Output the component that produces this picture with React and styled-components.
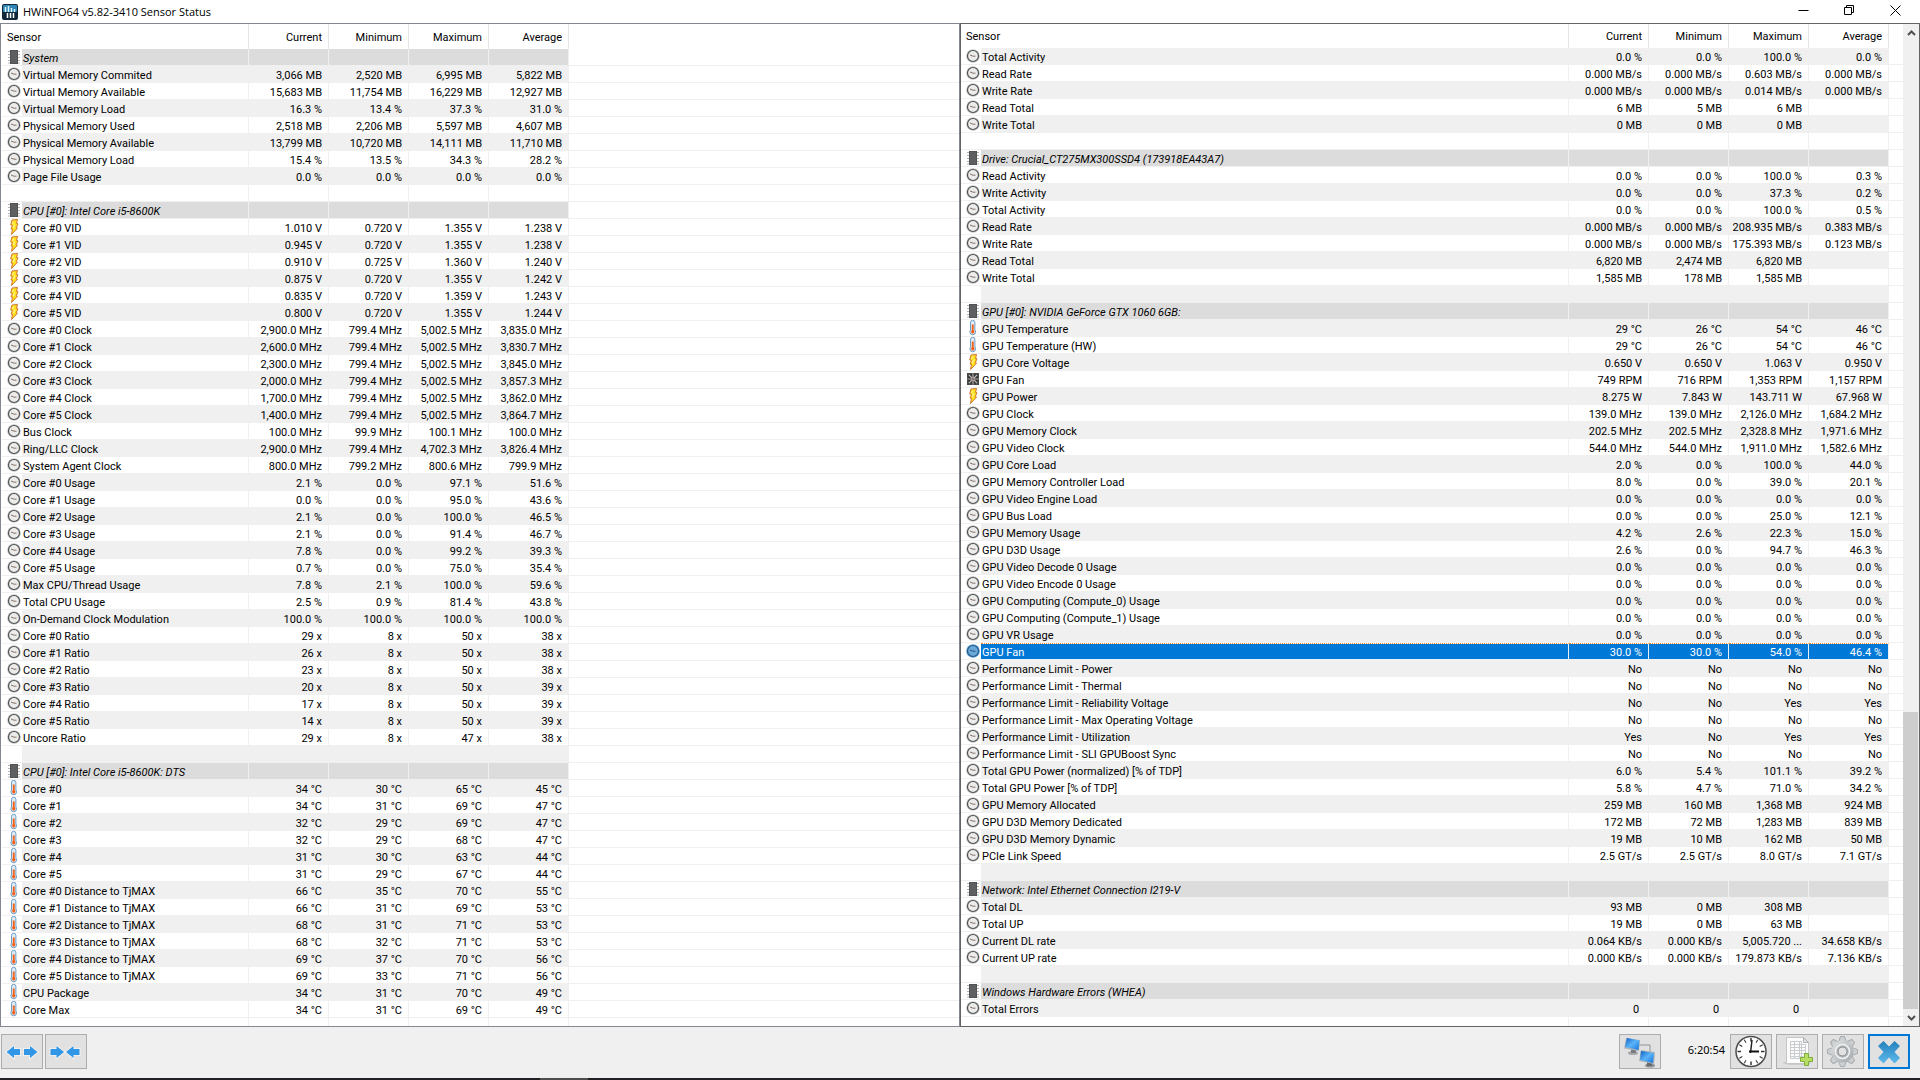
import React from "react";
import styled, { createGlobalStyle, css } from "styled-components";

const GlobalStyle = createGlobalStyle`
  * {
    box-sizing: border-box;
  }

  body {
    margin: 0;
    background: #f0f0f0;
    color: #000000;
    font-family: Roboto, "Noto Sans", sans-serif;
    font-size: 11px;
  }

  button {
    padding: 0;
    border: none;
    background: none;
    font: inherit;
  }

  svg {
    display: block;
  }
`;

const Window = styled.div`
  display: flex;
  flex-direction: column;
  min-height: 100vh;
`;

const TitleBar = styled.header`
  display: flex;
  align-items: flex-start;
  height: 23px;
  padding: 0 2px;
  background: #ffffff;
`;

const AppIcon = styled.svg`
  margin-top: 4px;
`;

const Title = styled.h1`
  flex: 1;
  margin: 0 0 0 5px;
  font-family: "Open Sans", "Noto Sans", sans-serif;
  font-size: 11px;
  font-weight: 400;
  line-height: 24px;
`;

const WindowButton = styled.button`
  display: flex;
  align-items: center;
  justify-content: center;
  width: 46px;
  height: 21px;

  &:hover {
    background: #e5e5e5;
  }
`;

const Panes = styled.main`
  display: grid;
  flex: 1;
  grid-template-columns: minmax(0, 1fr) minmax(0, 1fr);
`;

const Pane = styled.section`
  display: flex;
  padding-left: ${(props) => (props.$active ? 0 : 1)}px;
  background: #ffffff;
  border: 1px solid ${(props) => (props.$active ? "#646464" : "#828790")};
`;

const Table = styled.table`
  flex: 1;
  width: 100%;
  height: 0;
  table-layout: fixed;
  border-collapse: separate;
  border-spacing: 0;

  col.icon {
    width: 20px;
  }

  col.value {
    width: 80px;
  }
`;

const NameCol = styled.col`
  width: ${(props) => props.$width};
`;

const FillCol = styled.col`
  width: ${(props) => props.$width};
`;

const HeadCell = styled.th`
  height: ${(props) => props.$height}px;
  padding: 1px 6px 0 5px;
  border-right: 1px solid #e5e5e5;
  font-weight: 400;
  text-align: ${(props) => props.$align || "right"};

  &:last-child {
    border-right: none;
  }
`;

const Cell = styled.td`
  height: 17px;
  padding: 4px 6px 0 0;
  border-right: 1px solid #f0f0f0;
  border-bottom: 1px solid #f0f0f0;
  line-height: 12px;
  text-align: right;
  white-space: nowrap;
`;

const NameCell = styled(Cell)`
  padding: 4px 0 0 1px;
  overflow: hidden;
  text-align: left;
`;

const IconCell = styled(Cell)`
  padding: 0 0 0 4px;
  border-right: none;
`;

const FillCell = styled(Cell)`
  border-right: none;
`;

const Row = styled.tr`
  ${Cell}:not(${IconCell}):not(${FillCell}) {
    ${(props) =>
      props.$striped &&
      css`
        background: #f0f0f0;
      `}
    ${(props) =>
      props.$group &&
      css`
        background: #dcdcdc;
        background-clip: padding-box;
        font-style: italic;
      `}
    ${(props) =>
      props.$selected &&
      css`
        padding-top: 3px;
        background: #0078d7;
        background-clip: padding-box;
        color: #ffffff;
        border-top: 1px dotted #ff8728;
      `}
  }
`;

const TailCell = styled.td`
  height: ${(props) => props.$height}px;
  padding: 0;
  border-right: ${(props) => (props.$line ? "1px solid #f0f0f0" : "none")};
`;

const ScrollBar = styled.div`
  display: flex;
  flex-direction: column;
  width: 16px;
  background: #f0f0f0;
`;

const ScrollArrow = styled.button`
  display: flex;
  align-items: center;
  justify-content: center;
  height: 17px;
`;

const ScrollGap = styled.div`
  flex: 671;
`;

const ScrollThumb = styled.div`
  flex: 297;
  margin-right: 1px;
  background: #cdcdcd;
`;

const Toolbar = styled.footer`
  display: flex;
  align-items: center;
  justify-content: space-between;
  height: 51px;
  padding: 0 10px 2px 1px;
`;

const ToolGroup = styled.div`
  display: flex;
  gap: ${(props) => props.$gap}px;
`;

const ToolButton = styled.button`
  display: flex;
  align-items: center;
  justify-content: center;
  width: 42px;
  height: 35px;
  background: #e1e1e1;
  border: ${(props) =>
    props.$focused ? "2px solid #0078d7" : "1px solid #adadad"};

  &:hover {
    background: #e5f1fb;
  }
`;

const Elapsed = styled.time`
  width: 61px;
  padding-right: 1px;
  font-family: "Noto Sans", sans-serif;
  line-height: 32px;
  text-align: right;
`;

const TaskbarEdge = styled.div`
  height: 2px;
  padding-left: 540px;
  background: #202125;
`;

const TaskbarActive = styled.div`
  width: 48px;
  height: 2px;
  background: #4d4d50;
`;

const ChipIcon = () => (
  <svg width="16" height="16" viewBox="0 0 16 16">
    <path
      d="M2 2.500h12M2 5.500h12M2 8.500h12M2 11.500h12M2 14h12"
      stroke="#b4b4b4"
      strokeWidth="1"
    />
    <rect x="4" y="1" width="8" height="14" fill="#505254" />
    <rect x="5" y="2" width="6" height="12" fill="#5d5f61" />
  </svg>
);

const DialIcon = ({ selected }) => (
  <svg width="16" height="16" viewBox="0 0 16 16">
    <circle cx="8" cy="8" r="6.8" fill={selected ? "#5d9dd0" : "#c6c6c6"} />
    <circle
      cx="8"
      cy="8"
      r="5.500"
      fill={selected ? "#69a9da" : "#ececea"}
      stroke={selected ? "#24588a" : "#4e5153"}
      strokeWidth="1.200"
    />
    <path
      d="M5 7l3 1.200h2.500"
      fill="none"
      stroke={selected ? "#2c5578" : "#86736c"}
      strokeWidth="1"
    />
  </svg>
);

const BoltIcon = () => (
  <svg width="16" height="16" viewBox="0 0 16 16">
    <path
      d="M6 1l5.500-.5-1 4 1.500.3-1.800 4 1.300.4L5.500 15.500l1-5.300L5 10l1.500-3.600L4.700 6z"
      fill="#ffe21c"
      stroke="#cf7432"
      strokeWidth="1"
    />
    <path d="M7.500 2.500L6.500 5M8.500 5.500L7.500 9" stroke="#fff8bd" strokeWidth="1" />
  </svg>
);

const ThermoIcon = () => (
  <svg width="16" height="16" viewBox="0 0 16 16">
    <path
      d="M5.500 2.500a2.200 2.200 0 0 1 4.400 0V10a3 3 0 0 1 .6 2 2.800 2.800 0 0 1-5.600 0 3 3 0 0 1 .6-2z"
      fill="#dcebf5"
      stroke="#6d9fc4"
      strokeWidth="1"
    />
    <path d="M6.800 4.500h1.900V10l.8 1.500-.8 2H6.800l-.8-2 .8-1.500z" fill="#f4611a" />
  </svg>
);

const FanIcon = () => (
  <svg width="16" height="16" viewBox="0 0 16 16">
    <rect x="2" y="2" width="12" height="12" fill="#484848" />
    <circle cx="8" cy="8" r="5" fill="#2c2c2c" />
    <path
      d="M8 2.500v11M2.500 8h11M4 4l8 8M12 4l-8 8"
      stroke="#b9b5b5"
      strokeWidth="1.200"
    />
    <circle cx="8" cy="8" r="1.500" fill="#8a7474" />
  </svg>
);

const ICONS = {
  chip: ChipIcon,
  dial: DialIcon,
  bolt: BoltIcon,
  thermo: ThermoIcon,
  fan: FanIcon,
};

const ArrowPair = ({ inward }) => {
  const shapes = inward
    ? ["M1.500 8h6V5l7.500 6-7.500 6v-3h-6z", "M30.500 8h-6V5L17 11l7.500 6v-3h6z"]
    : ["M15 8H9V5l-7.500 6L9 17v-3h6z", "M19 8h6V5l7.500 6-7.500 6v-3h-6z"];
  return (
    <svg width="34" height="22" viewBox="0 0 34 22">
      {shapes.map((d) => (
        <g key={d}>
          <path
            d={d}
            fill="none"
            stroke="#f4f4f4"
            strokeWidth="2"
            strokeDasharray="2 1"
          />
          <path d={d} fill="#3296e6" />
        </g>
      ))}
    </svg>
  );
};

const NetworkIcon = () => (
  <svg width="34" height="32" viewBox="0 0 34 32">
    <defs>
      <linearGradient id="screen" x1="0" y1="0" x2="1" y2="1">
        <stop offset="0" stopColor="#0a5fc4" />
        <stop offset="0.5" stopColor="#5cb4f8" />
        <stop offset="1" stopColor="#1272dc" />
      </linearGradient>
    </defs>
    <path d="M16 9h11v8" fill="none" stroke="#8d9297" strokeWidth="1" />
    <ellipse cx="10" cy="17" rx="5" ry="2" fill="#a5a9ac" />
    <path d="M8 13h5v4H8z" fill="#777b80" />
    <path d="M3 2l14 2-1 11L1 12.500z" fill="#aeb4ba" />
    <path d="M4 2l12.500 2.500-1 9.500L2 11z" fill="url(#screen)" />
    <ellipse cx="27" cy="29.500" rx="5" ry="2" fill="#909498" />
    <path d="M24 26h5v4h-5z" fill="#666a70" />
    <path d="M18 14l14 2-1 12-15-3z" fill="#aeb4ba" />
    <path d="M18 15l13 2-1 10-13-3z" fill="url(#screen)" />
  </svg>
);

const ClockIcon = () => (
  <svg width="34" height="33" viewBox="0 0 34 33">
    <circle
      cx="17"
      cy="16.500"
      r="15"
      fill="#ffffff"
      stroke="#4c4c4c"
      strokeWidth="1.500"
    />
    {[...Array(12)].map((_, i) => (
      <path
        key={i}
        d="M17 3v3.500"
        stroke="#333333"
        strokeWidth={i % 3 === 0 ? 1.5 : 1}
        transform={`rotate(${i * 30} 17 16.500)`}
      />
    ))}
    <path d="M16.500 18L18 5" stroke="#222222" strokeWidth="1.500" />
    <path d="M15 16.500h10" stroke="#111111" strokeWidth="2" />
  </svg>
);

const ReportIcon = () => (
  <svg width="34" height="33" viewBox="0 0 34 33">
    <ellipse cx="17" cy="28" rx="14" ry="2" fill="#cbcbcb" />
    <path d="M6.500 2.500h17l5 5v21h-22z" fill="#fbfbfb" stroke="#c6c6c6" />
    <path d="M23.500 2.500v5h5z" fill="#e3e3e3" stroke="#b0b0b0" />
    <path
      d="M10.500 6.500h11v17h-11zM10.500 9.500h15M10.500 12.500h15M10.500 15.500h15M10.500 18.500h15M10.500 21.500h13M14.500 6.500v17M19.500 6.500v17M25.500 9.500v9"
      fill="none"
      stroke="#c9ccce"
    />
    <path
      d="M24.500 18.500h4v4h4v4h-4v4h-4v-4h-4v-4h4z"
      fill="#b7de64"
      stroke="#7fae38"
    />
  </svg>
);

const GearIcon = () => (
  <svg width="34" height="33" viewBox="0 0 34 33">
    <defs>
      <linearGradient id="metal" x1="0" y1="0" x2="1" y2="1">
        <stop offset="0" stopColor="#dfe2e3" />
        <stop offset="1" stopColor="#a3a8ab" />
      </linearGradient>
    </defs>
    <g fill="#cdd0d2" stroke="#a8acaf" strokeWidth="1">
      {[...Array(8)].map((_, i) => (
        <path
          key={i}
          d="M12.500 7.500l2-6h4l2 6z"
          transform={`rotate(${i * 45} 16.500 16.500)`}
        />
      ))}
    </g>
    <circle cx="16.500" cy="16.500" r="11" fill="url(#metal)" />
    <circle
      cx="16.500"
      cy="16.500"
      r="7"
      fill="#b3b7ba"
      stroke="#f3f3f3"
      strokeWidth="1.500"
    />
    <circle cx="16.500" cy="16.500" r="4.500" fill="#e1e1e1" stroke="#85898c" />
  </svg>
);

const CrossIcon = () => (
  <svg width="26" height="26" viewBox="0 0 26 26">
    <defs>
      <linearGradient id="cross" x1="0" y1="0" x2="0" y2="1">
        <stop offset="0" stopColor="#2381bd" />
        <stop offset="1" stopColor="#5fb9ec" />
      </linearGradient>
    </defs>
    <path
      d="M7.500 2l5.500 5.500L18.500 2 24 7l-5.500 6 5.500 6-5.500 5.500L13 18.500l-5.500 6L2 19l5.500-6L2 7z"
      fill="url(#cross)"
    />
  </svg>
);

const group = (name) => ["chip", name];
const blank = [];

const leftRows = [
  group("System"),
  ["dial", "Virtual Memory Commited", "3,066 MB", "2,520 MB", "6,995 MB", "5,822 MB"],
  ["dial", "Virtual Memory Available", "15,683 MB", "11,754 MB", "16,229 MB", "12,927 MB"],
  ["dial", "Virtual Memory Load", "16.3 %", "13.4 %", "37.3 %", "31.0 %"],
  ["dial", "Physical Memory Used", "2,518 MB", "2,206 MB", "5,597 MB", "4,607 MB"],
  ["dial", "Physical Memory Available", "13,799 MB", "10,720 MB", "14,111 MB", "11,710 MB"],
  ["dial", "Physical Memory Load", "15.4 %", "13.5 %", "34.3 %", "28.2 %"],
  ["dial", "Page File Usage", "0.0 %", "0.0 %", "0.0 %", "0.0 %"],
  blank,
  group("CPU [#0]: Intel Core i5-8600K"),
  ["bolt", "Core #0 VID", "1.010 V", "0.720 V", "1.355 V", "1.238 V"],
  ["bolt", "Core #1 VID", "0.945 V", "0.720 V", "1.355 V", "1.238 V"],
  ["bolt", "Core #2 VID", "0.910 V", "0.725 V", "1.360 V", "1.240 V"],
  ["bolt", "Core #3 VID", "0.875 V", "0.720 V", "1.355 V", "1.242 V"],
  ["bolt", "Core #4 VID", "0.835 V", "0.720 V", "1.359 V", "1.243 V"],
  ["bolt", "Core #5 VID", "0.800 V", "0.720 V", "1.355 V", "1.244 V"],
  ["dial", "Core #0 Clock", "2,900.0 MHz", "799.4 MHz", "5,002.5 MHz", "3,835.0 MHz"],
  ["dial", "Core #1 Clock", "2,600.0 MHz", "799.4 MHz", "5,002.5 MHz", "3,830.7 MHz"],
  ["dial", "Core #2 Clock", "2,300.0 MHz", "799.4 MHz", "5,002.5 MHz", "3,845.0 MHz"],
  ["dial", "Core #3 Clock", "2,000.0 MHz", "799.4 MHz", "5,002.5 MHz", "3,857.3 MHz"],
  ["dial", "Core #4 Clock", "1,700.0 MHz", "799.4 MHz", "5,002.5 MHz", "3,862.0 MHz"],
  ["dial", "Core #5 Clock", "1,400.0 MHz", "799.4 MHz", "5,002.5 MHz", "3,864.7 MHz"],
  ["dial", "Bus Clock", "100.0 MHz", "99.9 MHz", "100.1 MHz", "100.0 MHz"],
  ["dial", "Ring/LLC Clock", "2,900.0 MHz", "799.4 MHz", "4,702.3 MHz", "3,826.4 MHz"],
  ["dial", "System Agent Clock", "800.0 MHz", "799.2 MHz", "800.6 MHz", "799.9 MHz"],
  ["dial", "Core #0 Usage", "2.1 %", "0.0 %", "97.1 %", "51.6 %"],
  ["dial", "Core #1 Usage", "0.0 %", "0.0 %", "95.0 %", "43.6 %"],
  ["dial", "Core #2 Usage", "2.1 %", "0.0 %", "100.0 %", "46.5 %"],
  ["dial", "Core #3 Usage", "2.1 %", "0.0 %", "91.4 %", "46.7 %"],
  ["dial", "Core #4 Usage", "7.8 %", "0.0 %", "99.2 %", "39.3 %"],
  ["dial", "Core #5 Usage", "0.7 %", "0.0 %", "75.0 %", "35.4 %"],
  ["dial", "Max CPU/Thread Usage", "7.8 %", "2.1 %", "100.0 %", "59.6 %"],
  ["dial", "Total CPU Usage", "2.5 %", "0.9 %", "81.4 %", "43.8 %"],
  ["dial", "On-Demand Clock Modulation", "100.0 %", "100.0 %", "100.0 %", "100.0 %"],
  ["dial", "Core #0 Ratio", "29 x", "8 x", "50 x", "38 x"],
  ["dial", "Core #1 Ratio", "26 x", "8 x", "50 x", "38 x"],
  ["dial", "Core #2 Ratio", "23 x", "8 x", "50 x", "38 x"],
  ["dial", "Core #3 Ratio", "20 x", "8 x", "50 x", "39 x"],
  ["dial", "Core #4 Ratio", "17 x", "8 x", "50 x", "39 x"],
  ["dial", "Core #5 Ratio", "14 x", "8 x", "50 x", "39 x"],
  ["dial", "Uncore Ratio", "29 x", "8 x", "47 x", "38 x"],
  blank,
  group("CPU [#0]: Intel Core i5-8600K: DTS"),
  ["thermo", "Core #0", "34 °C", "30 °C", "65 °C", "45 °C"],
  ["thermo", "Core #1", "34 °C", "31 °C", "69 °C", "47 °C"],
  ["thermo", "Core #2", "32 °C", "29 °C", "69 °C", "47 °C"],
  ["thermo", "Core #3", "32 °C", "29 °C", "68 °C", "47 °C"],
  ["thermo", "Core #4", "31 °C", "30 °C", "63 °C", "44 °C"],
  ["thermo", "Core #5", "31 °C", "29 °C", "67 °C", "44 °C"],
  ["thermo", "Core #0 Distance to TjMAX", "66 °C", "35 °C", "70 °C", "55 °C"],
  ["thermo", "Core #1 Distance to TjMAX", "66 °C", "31 °C", "69 °C", "53 °C"],
  ["thermo", "Core #2 Distance to TjMAX", "68 °C", "31 °C", "71 °C", "53 °C"],
  ["thermo", "Core #3 Distance to TjMAX", "68 °C", "32 °C", "71 °C", "53 °C"],
  ["thermo", "Core #4 Distance to TjMAX", "69 °C", "37 °C", "70 °C", "56 °C"],
  ["thermo", "Core #5 Distance to TjMAX", "69 °C", "33 °C", "71 °C", "56 °C"],
  ["thermo", "CPU Package", "34 °C", "31 °C", "70 °C", "49 °C"],
  ["thermo", "Core Max", "34 °C", "31 °C", "69 °C", "49 °C"],
];

const rightRows = [
  ["dial", "Total Activity", "0.0 %", "0.0 %", "100.0 %", "0.0 %"],
  ["dial", "Read Rate", "0.000 MB/s", "0.000 MB/s", "0.603 MB/s", "0.000 MB/s"],
  ["dial", "Write Rate", "0.000 MB/s", "0.000 MB/s", "0.014 MB/s", "0.000 MB/s"],
  ["dial", "Read Total", "6 MB", "5 MB", "6 MB"],
  ["dial", "Write Total", "0 MB", "0 MB", "0 MB"],
  blank,
  group("Drive: Crucial_CT275MX300SSD4 (173918EA43A7)"),
  ["dial", "Read Activity", "0.0 %", "0.0 %", "100.0 %", "0.3 %"],
  ["dial", "Write Activity", "0.0 %", "0.0 %", "37.3 %", "0.2 %"],
  ["dial", "Total Activity", "0.0 %", "0.0 %", "100.0 %", "0.5 %"],
  ["dial", "Read Rate", "0.000 MB/s", "0.000 MB/s", "208.935 MB/s", "0.383 MB/s"],
  ["dial", "Write Rate", "0.000 MB/s", "0.000 MB/s", "175.393 MB/s", "0.123 MB/s"],
  ["dial", "Read Total", "6,820 MB", "2,474 MB", "6,820 MB"],
  ["dial", "Write Total", "1,585 MB", "178 MB", "1,585 MB"],
  blank,
  group("GPU [#0]: NVIDIA GeForce GTX 1060 6GB:"),
  ["thermo", "GPU Temperature", "29 °C", "26 °C", "54 °C", "46 °C"],
  ["thermo", "GPU Temperature (HW)", "29 °C", "26 °C", "54 °C", "46 °C"],
  ["bolt", "GPU Core Voltage", "0.650 V", "0.650 V", "1.063 V", "0.950 V"],
  ["fan", "GPU Fan", "749 RPM", "716 RPM", "1,353 RPM", "1,157 RPM"],
  ["bolt", "GPU Power", "8.275 W", "7.843 W", "143.711 W", "67.968 W"],
  ["dial", "GPU Clock", "139.0 MHz", "139.0 MHz", "2,126.0 MHz", "1,684.2 MHz"],
  ["dial", "GPU Memory Clock", "202.5 MHz", "202.5 MHz", "2,328.8 MHz", "1,971.6 MHz"],
  ["dial", "GPU Video Clock", "544.0 MHz", "544.0 MHz", "1,911.0 MHz", "1,582.6 MHz"],
  ["dial", "GPU Core Load", "2.0 %", "0.0 %", "100.0 %", "44.0 %"],
  ["dial", "GPU Memory Controller Load", "8.0 %", "0.0 %", "39.0 %", "20.1 %"],
  ["dial", "GPU Video Engine Load", "0.0 %", "0.0 %", "0.0 %", "0.0 %"],
  ["dial", "GPU Bus Load", "0.0 %", "0.0 %", "25.0 %", "12.1 %"],
  ["dial", "GPU Memory Usage", "4.2 %", "2.6 %", "22.3 %", "15.0 %"],
  ["dial", "GPU D3D Usage", "2.6 %", "0.0 %", "94.7 %", "46.3 %"],
  ["dial", "GPU Video Decode 0 Usage", "0.0 %", "0.0 %", "0.0 %", "0.0 %"],
  ["dial", "GPU Video Encode 0 Usage", "0.0 %", "0.0 %", "0.0 %", "0.0 %"],
  ["dial", "GPU Computing (Compute_0) Usage", "0.0 %", "0.0 %", "0.0 %", "0.0 %"],
  ["dial", "GPU Computing (Compute_1) Usage", "0.0 %", "0.0 %", "0.0 %", "0.0 %"],
  ["dial", "GPU VR Usage", "0.0 %", "0.0 %", "0.0 %", "0.0 %"],
  ["dial", "GPU Fan", "30.0 %", "30.0 %", "54.0 %", "46.4 %"],
  ["dial", "Performance Limit - Power", "No", "No", "No", "No"],
  ["dial", "Performance Limit - Thermal", "No", "No", "No", "No"],
  ["dial", "Performance Limit - Reliability Voltage", "No", "No", "Yes", "Yes"],
  ["dial", "Performance Limit - Max Operating Voltage", "No", "No", "No", "No"],
  ["dial", "Performance Limit - Utilization", "Yes", "No", "Yes", "Yes"],
  ["dial", "Performance Limit - SLI GPUBoost Sync", "No", "No", "No", "No"],
  ["dial", "Total GPU Power (normalized) [% of TDP]", "6.0 %", "5.4 %", "101.1 %", "39.2 %"],
  ["dial", "Total GPU Power [% of TDP]", "5.8 %", "4.7 %", "71.0 %", "34.2 %"],
  ["dial", "GPU Memory Allocated", "259 MB", "160 MB", "1,368 MB", "924 MB"],
  ["dial", "GPU D3D Memory Dedicated", "172 MB", "72 MB", "1,283 MB", "839 MB"],
  ["dial", "GPU D3D Memory Dynamic", "19 MB", "10 MB", "162 MB", "50 MB"],
  ["dial", "PCIe Link Speed", "2.5 GT/s", "2.5 GT/s", "8.0 GT/s", "7.1 GT/s"],
  blank,
  group("Network: Intel Ethernet Connection I219-V"),
  ["dial", "Total DL", "93 MB", "0 MB", "308 MB"],
  ["dial", "Total UP", "19 MB", "0 MB", "63 MB"],
  ["dial", "Current DL rate", "0.064 KB/s", "0.000 KB/s", "5,005.720 ...", "34.658 KB/s"],
  ["dial", "Current UP rate", "0.000 KB/s", "0.000 KB/s", "179.873 KB/s", "7.136 KB/s"],
  blank,
  group("Windows Hardware Errors (WHEA)"),
  ["dial", "Total Errors", "0\u00a0", "0\u00a0", "0\u00a0"],
];

const SensorTable = ({
  rows,
  stripe,
  selected,
  headHeight,
  tailHeight,
  nameWidth,
  fillWidth,
}) => (
  <Table>
    <colgroup>
      <col className="icon" />
      <NameCol $width={nameWidth} />
      <col className="value" />
      <col className="value" />
      <col className="value" />
      <col className="value" />
      <FillCol $width={fillWidth} />
    </colgroup>
    <thead>
      <tr>
        <HeadCell colSpan={2} $height={headHeight} $align="left">
          Sensor
        </HeadCell>
        {["Current", "Minimum", "Maximum", "Average"].map((label) => (
          <HeadCell key={label} $height={headHeight}>
            {label}
          </HeadCell>
        ))}
        <HeadCell as="td" $height={headHeight} />
      </tr>
    </thead>
    <tbody>
      {rows.map(([icon, name, ...values], index) => {
        const Icon = ICONS[icon];
        const isSelected = index === selected;
        return (
          <Row
            key={index}
            $striped={index % 2 === stripe}
            $group={icon === "chip"}
            $selected={isSelected}
          >
            <IconCell>{Icon && <Icon selected={isSelected} />}</IconCell>
            <NameCell>{name}</NameCell>
            {[0, 1, 2, 3].map((col) => (
              <Cell key={col}>{values[col]}</Cell>
            ))}
            <FillCell />
          </Row>
        );
      })}
      <tr>
        <TailCell $height={tailHeight} />
        {[0, 1, 2, 3, 4].map((col) => (
          <TailCell key={col} $height={tailHeight} $line />
        ))}
        <TailCell $height={tailHeight} />
      </tr>
    </tbody>
  </Table>
);

const App = () => {
  return (
    <Window>
      <GlobalStyle />
      <TitleBar>
        <AppIcon width="16" height="16" viewBox="0 0 16 16">
          <rect width="16" height="16" rx="2" fill="#12283a" />
          <rect x="1" y="1" width="14" height="7" rx="1" fill="#2f86b4" />
          <path
            d="M3.500 3v5M6.500 2v6M9.500 4v4M12.500 5v3"
            stroke="#d9f2fc"
            strokeWidth="1.500"
          />
          <path d="M5.500 9v5M8.500 9v5M11.500 9v5" stroke="#ffffff" strokeWidth="1.500" />
        </AppIcon>
        <Title>HWiNFO64 v5.82-3410 Sensor Status</Title>
        <WindowButton aria-label="Minimize">
          <svg width="11" height="11" viewBox="0 0 11 11">
            <path d="M.5 5.500h10" stroke="#000000" />
          </svg>
        </WindowButton>
        <WindowButton aria-label="Restore">
          <svg width="11" height="11" viewBox="0 0 11 11" fill="none" stroke="#000000">
            <path d="M.5 2.500h7v7h-7zM2.500 2.500v-2h7v7h-2" />
          </svg>
        </WindowButton>
        <WindowButton aria-label="Close">
          <svg width="11" height="11" viewBox="0 0 11 11" stroke="#000000">
            <path d="M.5.5l10 10M10.500.5l-10 10" />
          </svg>
        </WindowButton>
      </TitleBar>

      <Panes>
        <Pane>
          <SensorTable
            rows={leftRows}
            stripe={1}
            headHeight={25}
            tailHeight={8}
            nameWidth="227px"
            fillWidth="auto"
          />
        </Pane>
        <Pane $active>
          <SensorTable
            rows={rightRows}
            stripe={0}
            selected={35}
            headHeight={24}
            tailHeight={9}
            nameWidth="auto"
            fillWidth="14px"
          />
          <ScrollBar>
            <ScrollArrow aria-label="Scroll up">
              <svg width="9" height="6" viewBox="0 0 9 6" fill="none">
                <path d="M1 5l3.500-3.500L8 5" stroke="#505050" strokeWidth="2" />
              </svg>
            </ScrollArrow>
            <ScrollGap />
            <ScrollThumb />
            <ScrollArrow aria-label="Scroll down">
              <svg width="9" height="6" viewBox="0 0 9 6" fill="none">
                <path d="M1 1l3.500 3.500L8 1" stroke="#505050" strokeWidth="2" />
              </svg>
            </ScrollArrow>
          </ScrollBar>
        </Pane>
      </Panes>

      <Toolbar>
        <ToolGroup $gap={2}>
          <ToolButton aria-label="Expand columns">
            <ArrowPair />
          </ToolButton>
          <ToolButton aria-label="Shrink columns">
            <ArrowPair inward />
          </ToolButton>
        </ToolGroup>
        <ToolGroup $gap={4}>
          <ToolButton aria-label="Remote monitoring">
            <NetworkIcon />
          </ToolButton>
          <Elapsed>6:20:54</Elapsed>
          <ToolButton aria-label="Reset timer">
            <ClockIcon />
          </ToolButton>
          <ToolButton aria-label="Start logging">
            <ReportIcon />
          </ToolButton>
          <ToolButton aria-label="Settings">
            <GearIcon />
          </ToolButton>
          <ToolButton aria-label="Close sensors" $focused>
            <CrossIcon />
          </ToolButton>
        </ToolGroup>
      </Toolbar>
      <TaskbarEdge>
        <TaskbarActive />
      </TaskbarEdge>
    </Window>
  );
};

export default App;
